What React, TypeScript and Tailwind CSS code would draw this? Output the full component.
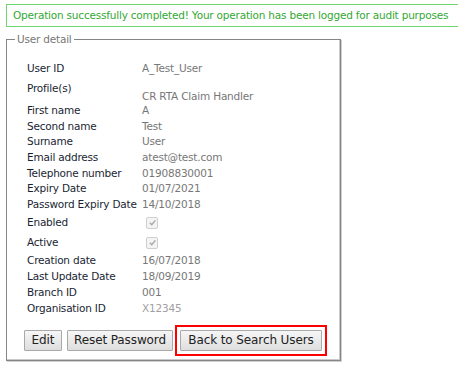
const rows: { label: string; value?: string; kind?: 'text' | 'check' | 'profile' | 'muted'; h: string }[] = [
  { label: 'User ID', value: 'A_Test_User', h: 'h-[16px]' },
  { label: 'Profile(s)', value: 'CR RTA Claim Handler', kind: 'profile', h: 'h-[26px]' },
  { label: 'First name', value: 'A', h: 'h-[15.7px]' },
  { label: 'Second name', value: 'Test', h: 'h-[15.7px]' },
  { label: 'Surname', value: 'User', h: 'h-[15.7px]' },
  { label: 'Email address', value: 'atest@test.com', h: 'h-[15.7px]' },
  { label: 'Telephone number', value: '01908830001', h: 'h-[15.7px]' },
  { label: 'Expiry Date', value: '01/07/2021', h: 'h-[15.7px]' },
  { label: 'Password Expiry Date', value: '14/10/2018', h: 'h-[15.7px]' },
  { label: 'Enabled', kind: 'check', h: 'h-[20px]' },
  { label: 'Active', kind: 'check', h: 'h-[20px]' },
  { label: 'Creation date', value: '16/07/2018', h: 'h-[16px]' },
  { label: 'Last Update Date', value: '18/09/2019', h: 'h-[16px]' },
  { label: 'Branch ID', value: '001', h: 'h-[16px]' },
  { label: 'Organisation ID', value: 'X12345', kind: 'muted', h: 'h-[16px]' },
]

function Check() {
  return (
    <span className="w-[12px] h-[12px] rounded-[2px] border border-[#cfcfcf] bg-[#f4f4f4] flex items-center justify-center">
      <svg width="9" height="9" viewBox="0 0 10 10">
        <path d="M2 5.2 L4.2 7.4 L8.2 2.6" fill="none" stroke="#a8a8a8" strokeWidth="1.6" />
      </svg>
    </span>
  )
}

function Btn({ children, w }: { children: React.ReactNode; w: string }) {
  return (
    <button
      className={`${w} h-[21px] border border-[#a9a9a9] rounded-[1px] bg-gradient-to-b from-[#f6f6f6] to-[#dedede] text-[12px] tracking-[-0.1px] text-[#222] leading-none whitespace-nowrap flex items-center justify-center`}
    >
      {children}
    </button>
  )
}

export default function App() {
  return (
    <div className="w-[458px] h-[376px] bg-white overflow-hidden font-['DejaVu_Sans',Verdana,sans-serif] text-[10.5px] tracking-[-0.2px]">
      <div className="ml-[6px] mt-[4px] w-[470px] h-[23px] border border-[#6fd66f] flex items-center pl-[6px] text-[#34a834] whitespace-nowrap">
        Operation successfully completed! Your operation has been logged for audit purposes
      </div>

      <fieldset className="ml-[6px] mt-[5px] w-[335px] h-[329px] border border-[#858585] shadow-[inset_-1px_-1px_0_#c9c9c9,1px_1px_0_#d0d0d0] px-[8px]">
        <legend className="px-[2px] text-[#777] leading-[14px]">User detail</legend>
        <div className="pl-[12px] pt-[15px]">
          {rows.map((r) => (
            <div key={r.label} className={`flex ${r.h}`}>
              <div className={`w-[115px] shrink-0 text-[#1a1f33] whitespace-nowrap ${r.kind === 'profile' ? 'pt-[4px]' : 'flex items-center'}`}>
                {r.label}
              </div>
              {r.kind === 'check' ? (
                <div className="flex items-center pl-[4px]">
                  <Check />
                </div>
              ) : (
                <div
                  className={`whitespace-nowrap ${r.kind === 'profile' ? 'pt-[12px]' : 'flex items-center'} ${
                    r.kind === 'muted' ? 'text-[#a0a0a0]' : 'text-[#777]'
                  }`}
                >
                  {r.value}
                </div>
              )}
            </div>
          ))}

          <div className="flex gap-[5px] mt-[13px] -ml-[3px]">
            <Btn w="w-[38px]">Edit</Btn>
            <Btn w="w-[106px]">Reset Password</Btn>
            <div className="relative ml-[2px]">
              <Btn w="w-[142px]">Back to Search Users</Btn>
              <div className="absolute -inset-x-[5px] -inset-y-[5px] border-2 border-[#ff0000] pointer-events-none" />
            </div>
          </div>
        </div>
      </fieldset>
    </div>
  )
}
